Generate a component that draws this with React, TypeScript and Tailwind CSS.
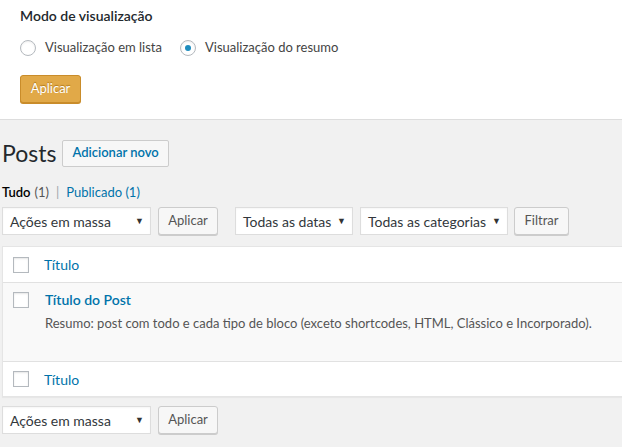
import React from 'react';

const font = { fontFamily: '"Segoe UI", Lato, "Noto Sans", sans-serif' };

function Radio({ checked, label }: { checked?: boolean; label: string }) {
  return (
    <label className="flex items-center gap-[9px]">
      <span className="flex h-4 w-4 items-center justify-center rounded-full border border-[#b4b9be] bg-white shadow-[inset_0_1px_2px_rgba(0,0,0,0.07)]">
        {checked && <span className="h-[6px] w-[6px] rounded-full bg-[#1e8cbe]" />}
      </span>
      <span className="text-[13px] text-[#444]">{label}</span>
    </label>
  );
}

function Select({ label, width }: { label: string; width: string }) {
  return (
    <div className={`flex h-7 items-center justify-between border border-[#ddd] bg-white pl-[7px] pr-[6px] text-[14px] text-[#32373c] shadow-[inset_0_1px_2px_rgba(0,0,0,0.04)] ${width}`}>
      <span>{label}</span>
      <span className="text-[9px] text-[#333]">▼</span>
    </div>
  );
}

function Button({ label, width }: { label: string; width: string }) {
  return (
    <div className={`flex h-7 items-center justify-center rounded-[3px] border border-[#ccc] bg-[#f7f7f7] text-[13px] text-[#555] shadow-[0_1px_0_#ccc] ${width}`}>
      {label}
    </div>
  );
}

function Checkbox() {
  return <span className="block h-4 w-4 border border-[#b4b9be] bg-white shadow-[inset_0_1px_2px_rgba(0,0,0,0.1)]" />;
}

export default function App() {
  return (
    <div className="h-[447px] w-[622px] overflow-hidden bg-[#f1f1f1]" style={font}>
      {/* Screen options panel */}
      <div className="border-b border-[#ddd] bg-white px-5 pt-[5px] pb-4">
        <div className="text-[14px] font-semibold text-[#23282d]">Modo de visualização</div>
        <div className="mt-[12px] flex items-center gap-[18px]">
          <Radio label="Visualização em lista" />
          <Radio checked label="Visualização do resumo" />
        </div>
        <div className="mt-[17px] flex h-7 w-[61px] items-center justify-center rounded-[3px] border border-[#c98c2a] bg-[#e1a948] text-[13px] text-white shadow-[0_1px_0_#c98c2a] [text-shadow:0_-1px_1px_#b07819]">
          Aplicar
        </div>
      </div>

      <div className="pl-[2px]">
        {/* Heading */}
        <div className="mt-[19px] flex items-center gap-[6px]">
          <h1 className="text-[23px] leading-[29px] text-[#23282d]">Posts</h1>
          <div className="flex h-[27px] items-center rounded-[2px] border border-[#ccc] bg-[#f7f7f7] px-[9px] text-[13px] font-semibold text-[#0073aa]">
            Adicionar novo
          </div>
        </div>

        {/* Views */}
        <div className="mt-[15px] flex items-center text-[13px] text-[#555]">
          <span className="font-semibold text-[#000]">Tudo</span>
          <span className="ml-1">(1)</span>
          <span className="mx-[7px] text-[#a0a5aa]">|</span>
          <span className="text-[#0073aa]">Publicado (1)</span>
        </div>

        {/* Filters */}
        <div className="mt-[5px] flex items-center">
          <Select label="Ações em massa" width="w-[149px]" />
          <div className="ml-[7px]"><Button label="Aplicar" width="w-[60px]" /></div>
          <div className="ml-[17px]"><Select label="Todas as datas" width="w-[118px]" /></div>
          <div className="ml-[7px]"><Select label="Todas as categorias" width="w-[148px]" /></div>
          <div className="ml-[6px]"><Button label="Filtrar" width="w-[55px]" /></div>
        </div>

        {/* Table */}
        <div className="mt-[11px] border-y border-l border-[#e5e5e5] bg-white shadow-[0_1px_1px_rgba(0,0,0,0.04)]">
          <div className="flex h-[36px] items-center border-b border-[#e1e1e1]">
            <div className="ml-[10px]"><Checkbox /></div>
            <span className="ml-[15px] text-[14px] text-[#0073aa]">Título</span>
          </div>
          <div className="flex h-[78px] items-start bg-[#f9f9f9] pt-[9px]">
            <div className="ml-[10px]"><Checkbox /></div>
            <div className="ml-[16px] -mt-[2px]">
              <div className="text-[14px] font-semibold leading-[19px] text-[#0073aa]">Título do Post</div>
              <div className="mt-[5px] text-[13px] text-[#555]">
                Resumo: post com todo e cada tipo de bloco (exceto shortcodes, HTML, Clássico e Incorporado).
              </div>
            </div>
          </div>
          <div className="flex h-[35px] items-center border-t border-[#e1e1e1]">
            <div className="ml-[10px]"><Checkbox /></div>
            <span className="ml-[15px] text-[14px] text-[#0073aa]">Título</span>
          </div>
        </div>

        {/* Bottom bulk actions */}
        <div className="mt-[9px] flex items-center">
          <Select label="Ações em massa" width="w-[149px]" />
          <div className="ml-[7px]"><Button label="Aplicar" width="w-[60px]" /></div>
        </div>
      </div>
    </div>
  );
}
